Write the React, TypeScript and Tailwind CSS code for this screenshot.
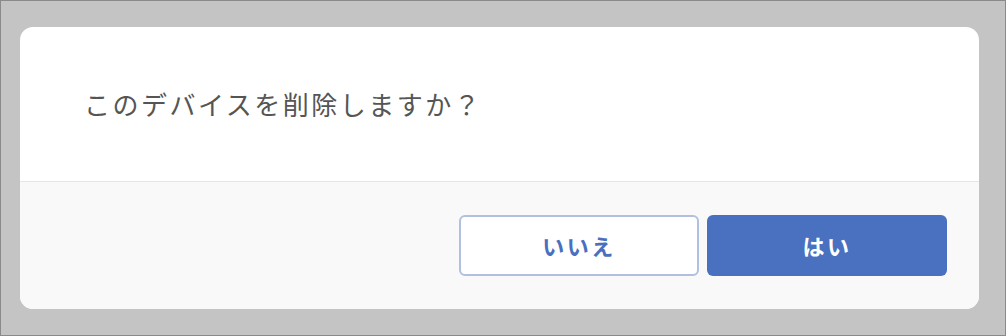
export default function App() {
  return (
    <div
      className="w-[1006px] h-[336px] bg-[#c4c4c4] border border-[#8a8a8a] pt-[26px] pl-[19px]"
      style={{ fontFamily: '"Noto Sans CJK JP", "Noto Sans", sans-serif' }}
    >
      <div className="w-[959px] h-[282px] bg-white rounded-[13px] overflow-hidden flex flex-col">
        {/* Message */}
        <div className="h-[155px] flex items-center pl-[64px] border-b border-[#e6e6e6]">
          <p className="text-[26px] tracking-[2.5px] text-[#555555] leading-none">このデバイスを削除しますか？</p>
        </div>

        {/* Actions */}
        <div className="flex-1 bg-[#f9f9f9] flex justify-end items-start gap-2 pt-[33px] pr-[32px]">
          <button className="w-[240px] h-[61px] rounded-md border-2 border-[#b0c0de] bg-white text-[#4a6fbe] text-[22px] font-bold tracking-[2.5px]">
            いいえ
          </button>
          <button className="w-[240px] h-[61px] rounded-md bg-[#4a70c0] text-white text-[22px] font-bold tracking-[2.5px]">
            はい
          </button>
        </div>
      </div>
    </div>
  );
}
